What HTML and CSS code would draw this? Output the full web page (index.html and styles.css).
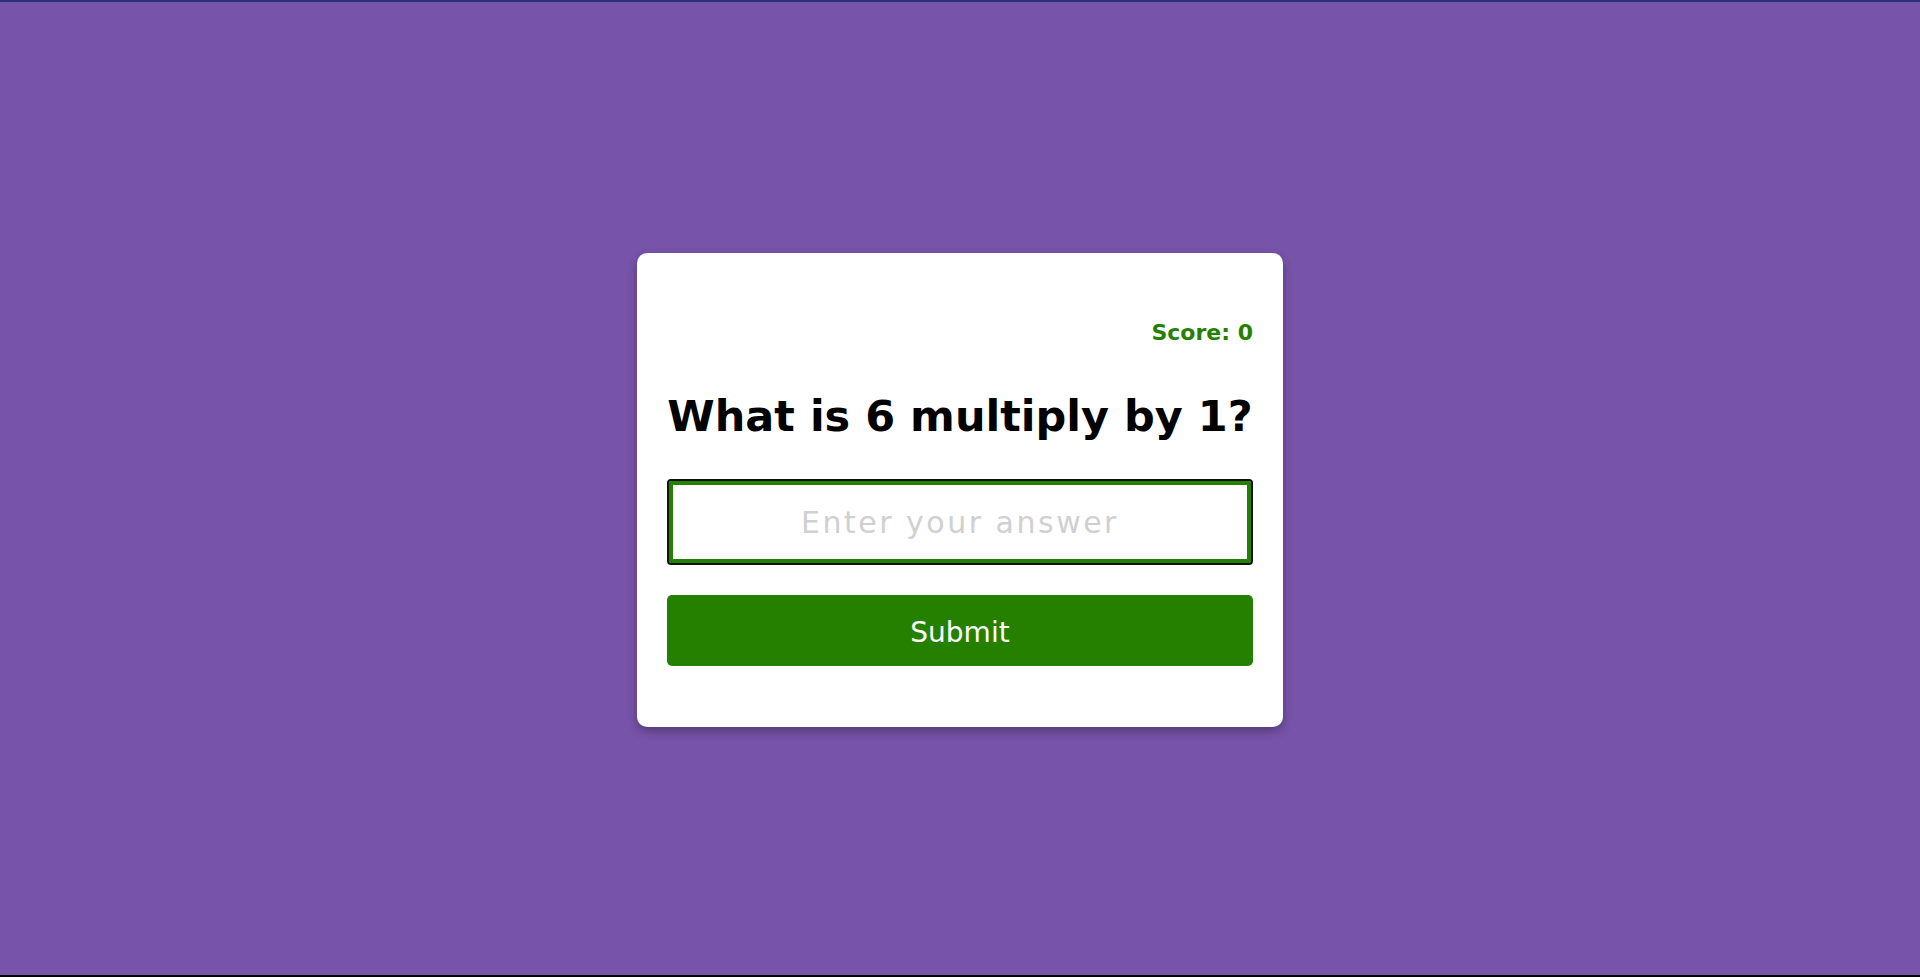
FILE: index.html
```html
<!DOCTYPE html>
<html lang="en">
<head>
<meta charset="utf-8">
<title>Math Quiz</title>
<link rel="stylesheet" href="styles.css">
</head>
<body>
  <main class="quiz-card">
    <div class="score">Score: 0</div>
    <h1 class="question">What is 6 multiply by 1?</h1>
    <input class="answer" type="text" placeholder="Enter your answer" autofocus>
    <button class="submit" type="button">Submit</button>
  </main>
</body>
</html>
```

FILE: styles.css
```css
* {
  box-sizing: border-box;
}

html, body {
  margin: 0;
  padding: 0;
}

body {
  min-height: 100vh;
  background: #7753a9;
  border-top: 2px solid #28327e;
  border-bottom: 2px solid #000;
  display: flex;
  align-items: center;
  justify-content: center;
  padding-top: 3px;
  font-family: "Comic Sans MS", "DejaVu Sans", sans-serif;
}

.quiz-card {
  width: 646px;
  background: #fff;
  border-radius: 10px;
  padding: 30px 30px 61px;
  box-shadow: 0 4px 10px rgba(0, 0, 0, 0.3);
  display: flex;
  flex-direction: column;
}

.score {
  margin-top: 35px;
  height: 30px;
  line-height: 30px;
  font-size: 22px;
  font-weight: bold;
  color: #268000;
  text-align: right;
}

.question {
  margin: 39px 0 0;
  height: 58px;
  line-height: 58px;
  font-size: 43px;
  font-weight: bold;
  color: #000;
  text-align: center;
  white-space: nowrap;
}

.answer {
  margin-top: 34px;
  width: 100%;
  height: 86px;
  border: 2px solid #111;
  border-radius: 4px;
  box-shadow: inset 0 0 0 4px #268000;
  outline: none;
  font-family: inherit;
  font-size: 30px;
  letter-spacing: 2.5px;
  text-align: center;
  color: #000;
  caret-color: #268000;
  background: #fff;
}

.answer::placeholder {
  color: #d0d0d0;
}

.submit {
  margin-top: 30px;
  width: 100%;
  height: 71px;
  border: none;
  border-radius: 5px;
  background: #268000;
  color: #fff;
  font-family: inherit;
  font-size: 28px;
  padding-top: 4px;
  cursor: pointer;
}
```
